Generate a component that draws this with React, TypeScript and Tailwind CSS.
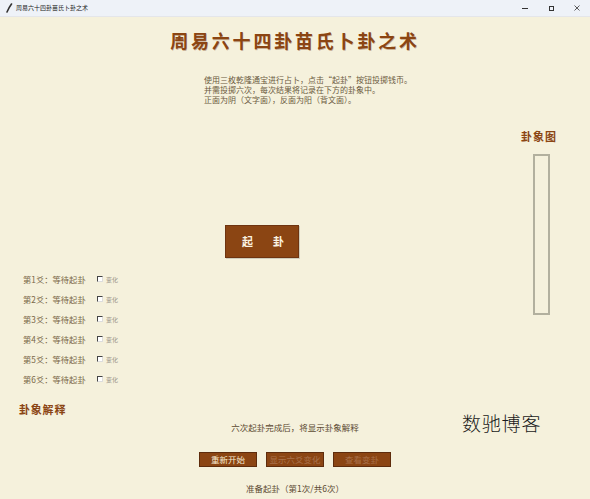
import React from "react";

const cjk = { fontFamily: '"Noto Sans CJK SC", "Noto Sans", sans-serif' };

function TitleBar() {
  return (
    <div className="h-[17px] flex items-center bg-[#eef2f8] border-b border-[#e4e6ea]" style={cjk}>
      <svg width="10" height="10" viewBox="0 0 10 10" className="ml-[4px]">
        <path d="M7.5 1 C6 3, 4.5 5.5, 3 9" stroke="#333" strokeWidth="1.6" fill="none" strokeLinecap="round" />
      </svg>
      <span className="ml-[2px] text-[6px] leading-none text-[#222]">周易六十四卦苗氏卜卦之术</span>
      <div className="ml-auto flex items-center h-full">
        <div className="w-[26px] h-full flex items-center justify-center">
          <div className="w-[6px] h-px bg-[#333]" />
        </div>
        <div className="w-[26px] h-full flex items-center justify-center">
          <div className="w-[5px] h-[5px] border border-[#333]" />
        </div>
        <div className="w-[26px] h-full flex items-center justify-center">
          <svg width="6" height="6" viewBox="0 0 6 6">
            <path d="M0.5 0.5 L5.5 5.5 M5.5 0.5 L0.5 5.5" stroke="#333" strokeWidth="0.8" />
          </svg>
        </div>
      </div>
    </div>
  );
}

function YaoRow({ n }: { n: number }) {
  return (
    <div className="h-[20px] flex items-center">
      <span className="text-[8.3px] text-[#7a6848] w-[74px]">第{n}爻：等待起卦</span>
      <span className="w-[6px] h-[6px] border-l border-t border-[#444] border-r border-b border-r-[#ddd] border-b-[#ddd] bg-white" />
      <span className="ml-[3px] text-[6px] text-[#9a9488]">变化</span>
    </div>
  );
}

export default function App() {
  return (
    <div className="w-[590px] h-[499px] flex flex-col bg-[#f5f1dc] overflow-hidden relative" style={cjk}>
      <TitleBar />

      <div className="mt-[12px] h-[22px] flex items-center justify-center">
        <h1
          className="text-[18px] font-bold tracking-[2.8px] text-[#8b4513] leading-none"
          style={{ textShadow: "0.5px 0.5px 0 rgba(120,60,20,0.35)" }}
        >
          周易六十四卦苗氏卜卦之术
        </h1>
      </div>

      <div className="mt-[24px] pl-[204px] text-[8px] leading-[10px] text-[#6b5a3e]">
        <p>使用三枚乾隆通宝进行占卜，点击“起卦”按钮投掷钱币。</p>
        <p>并需投掷六次，每次结果将记录在下方的卦象中。</p>
        <p>正面为阴（文字面），反面为阳（背文面）。</p>
      </div>

      <div className="flex">
        <div className="flex-1 flex flex-col">
          <button className="mt-[120px] ml-[225px] w-[74px] h-[33px] bg-[#8b4513] border border-[#6e3410] shadow-[1px_1px_0_rgba(0,0,0,0.15)] flex items-center justify-center gap-[20px] pl-[2px] text-[11px] font-bold text-[#fbf3e2]">
            <span>起</span>
            <span>卦</span>
          </button>
          <div className="mt-[11px] pl-[23px] flex flex-col">
            {[1, 2, 3, 4, 5, 6].map((n) => (
              <YaoRow key={n} n={n} />
            ))}
          </div>
        </div>
        <div className="w-[80px] flex flex-col">
          <div className="mt-[24px] ml-[11px] h-[14px] flex items-center text-[11px] font-bold tracking-[1px] text-[#8b4513] leading-none">
            卦象图
          </div>
          <div className="mt-[11px] ml-[23px] w-[17px] h-[161px] border-2 border-[#b2b09e]" />
        </div>
      </div>

      <div className="mt-[13px] pl-[19px] h-[14px] flex items-center text-[11px] font-bold tracking-[0.8px] text-[#8b4513] leading-none">
        卦象解释
      </div>

      <div className="mt-[5px] h-[12px] flex items-center justify-center text-[8.5px] text-[#5c4a32]">
        六次起卦完成后，将显示卦象解释
      </div>

      <div className="mt-[19px] flex justify-center gap-[9px]">
        <button className="w-[58px] h-[15px] bg-[#8b4513] border border-[#5e2c0c] text-[8.5px] text-[#f6ead0] flex items-center justify-center leading-none">
          重新开始
        </button>
        <button disabled className="w-[58px] h-[15px] bg-[#8b4513] border border-[#5e2c0c] text-[8.5px] text-[#a8704a] flex items-center justify-center leading-none">
          显示六爻变化
        </button>
        <button disabled className="w-[58px] h-[15px] bg-[#8b4513] border border-[#5e2c0c] text-[8.5px] text-[#a8704a] flex items-center justify-center leading-none">
          查看变卦
        </button>
      </div>

      <div className="mt-[15px] h-[12px] flex items-center justify-center text-[8.5px] text-[#5c4a32]">
        准备起卦（第1次/共6次）
      </div>

      <div className="absolute left-[462px] top-[413px] text-[19px] font-light leading-none tracking-[0.8px] text-[#1a1a1a]">
        数驰博客
      </div>
    </div>
  );
}
